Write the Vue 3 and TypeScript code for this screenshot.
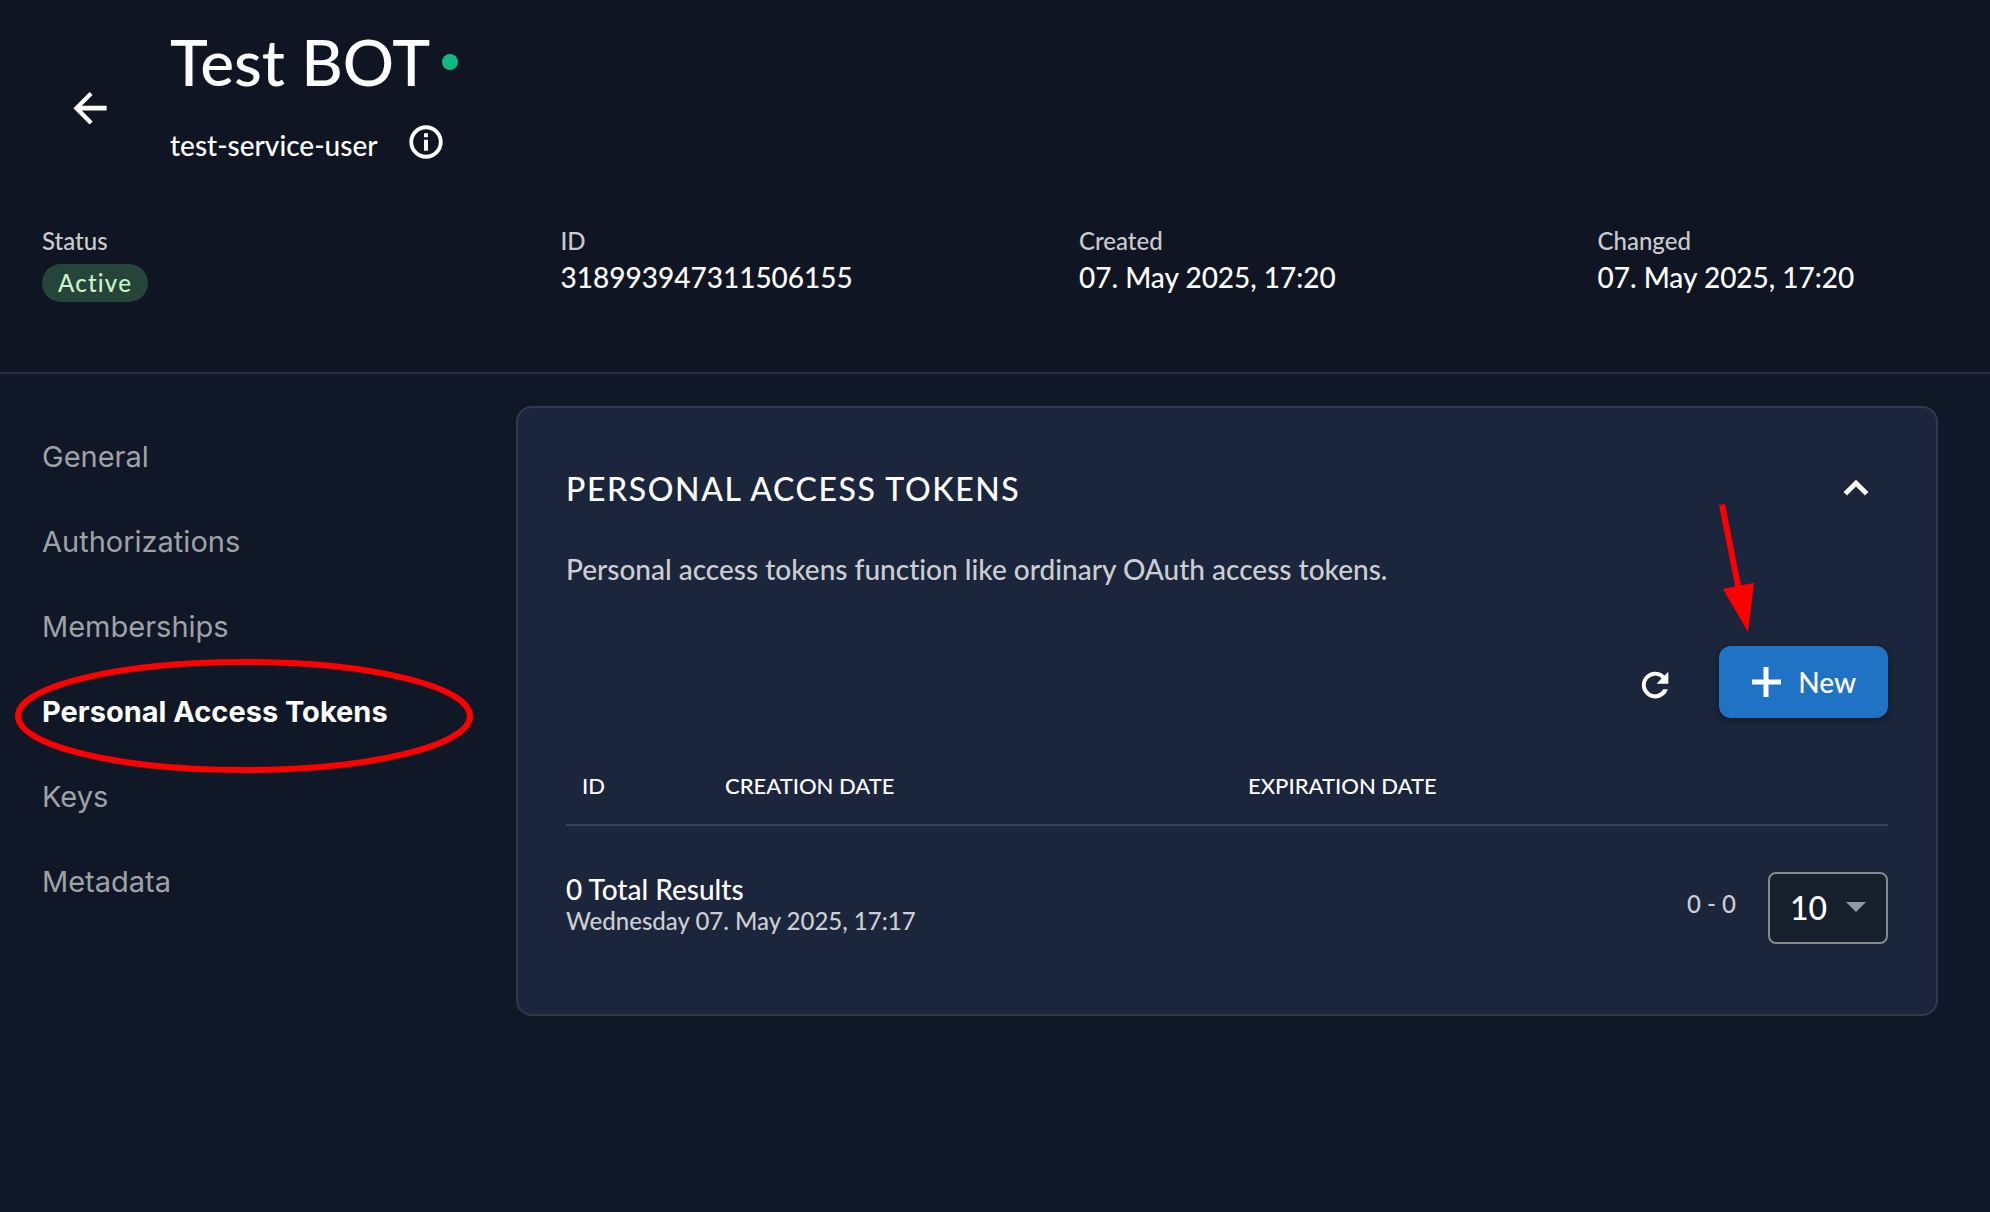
<script setup lang="ts">
import { ref } from 'vue'

interface Detail {
  label: string
  value: string
  badge?: boolean
}

const details: Detail[] = [
  { label: 'Status', value: 'Active', badge: true },
  { label: 'ID', value: '318993947311506155' },
  { label: 'Created', value: '07. May 2025, 17:20' },
  { label: 'Changed', value: '07. May 2025, 17:20' },
]

const sections = ['General', 'Authorizations', 'Memberships', 'Personal Access Tokens', 'Keys', 'Metadata']
const current = ref('Personal Access Tokens')
const highlighted = 'Personal Access Tokens'
const pageSize = ref(10)
const pageSizes = [10, 20, 50, 100]
</script>

<template>
  <div class="page">
    <header class="top">
      <div class="title-row">
        <button class="icon-button back" type="button" aria-label="Back">
          <svg width="48" height="48" viewBox="0 0 24 24" fill="currentColor">
            <path d="M20.3 10.9H7.9l5.4-5.4-1.5-1.5L3.7 12.1l8.1 8.1 1.5-1.5-5.4-5.4h12.4z" />
          </svg>
        </button>
        <div class="titles">
          <h1>Test BOT<span class="dot"></span></h1>
          <div class="subtitle">
            <span>test-service-user</span>
            <button class="icon-button" type="button" aria-label="Information">
              <svg width="40" height="40" viewBox="0 0 24 24" fill="currentColor">
                <path d="M12 2a10 10 0 1 0 0 20 10 10 0 0 0 0-20zm0 17.7a7.7 7.7 0 1 1 0-15.4 7.7 7.7 0 0 1 0 15.4zM10.8 6.8h2.4v2.3h-2.4zm0 3.9h2.4v6.5h-2.4z" />
              </svg>
            </button>
          </div>
        </div>
      </div>
      <dl class="details">
        <div v-for="item in details" :key="item.label">
          <dt>{{ item.label }}</dt>
          <dd :class="{ badge: item.badge }">{{ item.value }}</dd>
        </div>
      </dl>
    </header>

    <div class="body">
      <nav class="sidenav">
        <a
          v-for="name in sections"
          :key="name"
          href="#"
          :class="{ active: name === current }"
          @click.prevent="current = name"
        >
          {{ name }}
          <svg v-if="name === highlighted" class="ring" width="458" height="114" viewBox="0 0 458 114" aria-hidden="true">
            <ellipse cx="229" cy="57" rx="226" ry="54" fill="none" stroke="#ff0000" stroke-width="6" />
          </svg>
        </a>
      </nav>

      <main class="card">
        <div class="card-head">
          <h2>PERSONAL ACCESS TOKENS</h2>
          <button class="icon-button collapse" type="button" aria-label="Collapse">
            <svg width="48" height="48" viewBox="0 0 24 24" fill="currentColor">
              <path d="M7.5 15.2 12 10.7l4.5 4.5 1.7-1.7L12 7.4 5.8 13.500z" />
            </svg>
          </button>
        </div>
        <p class="description">Personal access tokens function like ordinary OAuth access tokens.</p>

        <div class="actions">
          <button class="icon-button refresh" type="button" aria-label="Refresh">
            <svg width="40" height="40" viewBox="0 0 24 24" fill="currentColor">
              <path d="M17.7 6.3A8 8 0 1 0 19.7 14.6H17A5.6 5.6 0 1 1 16 8l-3 3.2h7V4z" />
            </svg>
          </button>
          <button class="new" type="button">
            <svg width="48" height="48" viewBox="0 0 48 48" aria-hidden="true">
              <path d="M24 9v30M10 24h29" fill="none" stroke="currentColor" stroke-width="5" />
            </svg>
            New
            <svg class="pointer" width="36" height="130" viewBox="0 0 36 130" fill="#ff0000" aria-hidden="true">
              <path d="M0 2 6 1 22 82.300 35 80 29 129 4 86 16.300 83.600z" />
            </svg>
          </button>
        </div>

        <table>
          <colgroup>
            <col class="col-id" />
            <col class="col-created" />
            <col />
          </colgroup>
          <thead>
            <tr>
              <th scope="col">ID</th>
              <th scope="col">CREATION DATE</th>
              <th scope="col">EXPIRATION DATE</th>
            </tr>
          </thead>
        </table>

        <div class="paginator">
          <div class="totals">
            <div class="count">0 Total Results</div>
            <div class="timestamp">Wednesday 07. May 2025, 17:17</div>
          </div>
          <span class="range">0 - 0</span>
          <div class="size">
            <select v-model="pageSize" aria-label="Results per page">
              <option v-for="size in pageSizes" :key="size" :value="size">{{ size }}</option>
            </select>
            <svg width="20" height="10" viewBox="0 0 20 10" aria-hidden="true">
              <path d="M0 0h20L10 10z" fill="#93969f" />
            </svg>
          </div>
        </div>
      </main>
    </div>
  </div>
</template>

<style>
body {
  margin: 0;
  background: #101726;
}
</style>

<style scoped>
.page {
  min-height: 100vh;
  background: #101726;
  color: #fff;
  font-family: Lato, sans-serif;
  font-size: 28px;
  font-weight: 500;
  font-variant-ligatures: none;
}

h1,
h2,
p,
dl,
dd {
  margin: 0;
  font-weight: 500;
}

button,
select {
  font: inherit;
  color: inherit;
}

svg {
  display: block;
  flex: none;
}

.icon-button {
  display: flex;
  align-items: center;
  justify-content: center;
  padding: 0;
  border: 0;
  background: none;
}

.top {
  padding: 26px 42px 70px;
  border-bottom: 2px solid #2b303e;
  background: #0f1522;
}

.title-row {
  display: flex;
  align-items: center;
  gap: 32px;
}

.back {
  width: 96px;
  height: 96px;
}

.titles {
  padding-bottom: 28px;
}

h1 {
  display: flex;
  align-items: center;
  gap: 12px;
  font-size: 64px;
  line-height: 72px;
}

.dot {
  width: 16px;
  height: 16px;
  border-radius: 50%;
  background: #10b981;
}

.subtitle {
  display: flex;
  gap: 28px;
  margin-top: 24px;
}

.subtitle span {
  padding-top: 6px;
  line-height: 34px;
}

.details {
  display: grid;
  grid-template-columns: repeat(4, 1fr);
  gap: 168px;
  margin-top: 35px;
}

dt {
  color: #c9cbcf;
  font-size: 24px;
  line-height: 32px;
}

dd {
  margin-top: 2px;
  line-height: 36px;
  white-space: nowrap;
}

dd.badge {
  width: max-content;
  margin-top: 7px;
  padding: 0 16px;
  border-radius: 19px;
  background: #25443a;
  color: #cbf4c9;
  font-size: 24px;
  line-height: 38px;
  letter-spacing: 0.05em;
}

.body {
  display: grid;
  grid-template-columns: 474px 1fr;
  align-items: start;
  padding: 0 52px 32px 42px;
}

.sidenav {
  display: flex;
  flex-direction: column;
  align-items: flex-start;
  padding-top: 40px;
  font-family: Inter, sans-serif;
  font-size: 29px;
  font-weight: 400;
  line-height: 85px;
}

.sidenav a {
  position: relative;
  color: #9fa2a8;
  text-decoration: none;
  white-space: nowrap;
}

.sidenav a.active {
  color: #fff;
  font-weight: 700;
}

.ring {
  position: absolute;
  top: -10px;
  left: -27px;
  pointer-events: none;
}

.card {
  margin-top: 32px;
  padding: 61px 48px 70px;
  border: 2px solid #2f3b4d;
  border-radius: 16px;
  background: #1b253b;
}

.card-head {
  display: flex;
  align-items: center;
  justify-content: space-between;
  height: 40px;
}

h2 {
  font-size: 32px;
  line-height: 40px;
  letter-spacing: 0.05em;
}

.collapse {
  width: 64px;
  height: 40px;
}

.description {
  margin-top: 42px;
  color: #cbced3;
  line-height: 36px;
}

.actions {
  display: flex;
  align-items: flex-end;
  justify-content: flex-end;
  gap: 24px;
  margin-top: 59px;
}

.refresh {
  width: 80px;
  height: 66px;
}

.new {
  position: relative;
  display: flex;
  align-items: center;
  gap: 8px;
  height: 72px;
  padding: 0 32px 0 23px;
  border: 0;
  border-radius: 12px;
  background: #2073c4;
  box-shadow: 0 2px 6px rgba(0, 0, 0, 0.4);
}

.pointer {
  position: absolute;
  bottom: 85px;
  left: 0;
  pointer-events: none;
}

table {
  width: 100%;
  margin-top: 28px;
  border-spacing: 0;
  table-layout: fixed;
}

.col-id {
  width: 159px;
}

.col-created {
  width: 523px;
}

th {
  height: 78px;
  padding: 0;
  border-bottom: 2px solid #38445a;
  font-size: 22px;
  font-weight: 500;
  text-align: left;
}

th:first-child {
  padding-left: 16px;
}

.paginator {
  display: flex;
  align-items: flex-start;
  gap: 32px;
  margin-top: 46px;
}

.totals {
  flex: 1;
}

.count {
  line-height: 34px;
}

.timestamp {
  color: #cbced3;
  font-size: 24px;
  line-height: 30px;
}

.range {
  color: #cbced3;
  font-size: 24px;
  line-height: 64px;
}

.size {
  position: relative;
}

.size select {
  display: block;
  width: 120px;
  height: 72px;
  padding: 0 20px 2px;
  border: 2px solid #84878c;
  border-radius: 8px;
  background: #161f2c;
  font-size: 32px;
  appearance: none;
}

.size svg {
  position: absolute;
  top: 30px;
  right: 22px;
  pointer-events: none;
}
</style>
